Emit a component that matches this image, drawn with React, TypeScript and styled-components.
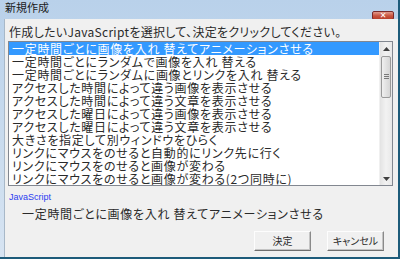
import styled, { createGlobalStyle } from "styled-components";

const GlobalStyle = createGlobalStyle`
  html, body {
    margin: 0;
    padding: 0;
    width: 400px;
    height: 259px;
    overflow: hidden;
    background: #f0f0f0;
  }
  * {
    box-sizing: border-box;
  }
`;

const Window = styled.div`
  width: 400px;
  height: 259px;
  display: flex;
  flex-direction: column;
  background: linear-gradient(180deg, #b9d1ea 0%, #d7e4f2 100%);
  border-right: 2px solid #1d5b7a;
  border-bottom: 2px solid #1d5b7a;
  font-family: "Noto Sans CJK JP", "Noto Sans", sans-serif;
  font-feature-settings: "palt";
  color: #2a2a2a;
`;

const TitleBar = styled.div`
  height: 19px;
  flex: none;
  display: flex;
  align-items: flex-start;
  justify-content: space-between;
  padding: 0 4px 0 5px;
`;

const Title = styled.div`
  font-size: 11px;
  line-height: 15px;
  color: #1a1a1a;
`;

const CloseButton = styled.div`
  width: 22px;
  height: 9px;
  margin-top: 11px;
  border: 1px solid #7a2a2a;
  border-radius: 2px;
  background: linear-gradient(180deg, #e29a8c 0%, #c9543f 55%, #b8402c 100%);
  color: #fff;
  font-family: "DejaVu Sans", sans-serif;
  font-weight: bold;
  font-size: 8px;
  line-height: 7px;
  text-align: center;
`;

const Client = styled.div`
  flex: 1;
  margin: 0 0 0 4px;
  background: #f0f0f0;
  border-left: 1px solid #a8b8c8;
  display: flex;
  flex-direction: column;
  padding: 5px 6px 6px 3px;
`;

const Prompt = styled.div`
  font-size: 12px;
  line-height: 16px;
  letter-spacing: 0.3px;
  padding-left: 1px;
  margin-bottom: 1px;
`;

const ListBox = styled.div`
  height: 145px;
  width: 385px;
  border: 1px solid #828790;
  background: #fff;
  display: flex;
`;

const Items = styled.div`
  flex: 1;
  overflow: hidden;
`;

const Row = styled.div<{ $selected?: boolean }>`
  height: 13px;
  line-height: 13px;
  font-size: 12px;
  letter-spacing: 0.7px;
  padding-left: 3px;
  white-space: nowrap;
  background: ${(p) => (p.$selected ? "#3399ff" : "transparent")};
  color: ${(p) => (p.$selected ? "#ffffff" : "#2a2a2a")};
`;

const ScrollBar = styled.div`
  width: 13px;
  flex: none;
  display: flex;
  flex-direction: column;
  background: linear-gradient(90deg, #e3e3e3 0%, #f2f2f2 50%, #e8e8e8 100%);
  border-left: 1px solid #f0f0f0;
`;

const Arrow = styled.div`
  height: 13px;
  flex: none;
  display: flex;
  align-items: center;
  justify-content: center;
`;

const Track = styled.div`
  flex: 1;
  padding: 1px 1px;
`;

const Thumb = styled.div`
  height: 42px;
  border: 1px solid #9a9a9a;
  border-radius: 2px;
  background: linear-gradient(90deg, #f0f0f0 0%, #e2e2e2 50%, #d6d6d6 100%);
  display: flex;
  align-items: center;
  justify-content: center;
`;

const Grip = styled.div`
  width: 5px;
  height: 6px;
  background: repeating-linear-gradient(180deg, #7a7a7a 0 1px, transparent 1px 2px);
`;

const Caption = styled.div`
  margin-top: 6px;
  font-family: "Liberation Sans", Arial, sans-serif;
  font-size: 9px;
  line-height: 10px;
  color: #2a3cf0;
  padding-left: 1px;
`;

const Description = styled.div`
  margin-top: 4px;
  padding-left: 14px;
  font-size: 12px;
  line-height: 16px;
  letter-spacing: 0.7px;
`;

const Buttons = styled.div`
  margin-top: auto;
  display: flex;
  justify-content: flex-end;
  gap: 16px;
  padding-right: 8px;
`;

const Button = styled.div`
  width: 57px;
  height: 20px;
  border: 1px solid;
  border-color: #fdfdfd #8a8a8a #6f6f6f #fdfdfd;
  box-shadow: inset -1px -1px 0 #c4c4c4;
  background: #f0f0f0;
  font-size: 10px;
  line-height: 18px;
  text-align: center;
`;

const items = [
  "一定時間ごとに画像を入れ 替えてアニメーションさせる",
  "一定時間ごとにランダムで画像を入れ 替える",
  "一定時間ごとにランダムに画像とリンクを入れ 替える",
  "アクセスした時間によって違う画像を表示させる",
  "アクセスした時間によって違う文章を表示させる",
  "アクセスした曜日によって違う画像を表示させる",
  "アクセスした曜日によって違う文章を表示させる",
  "大きさを指定して別ウィンドウをひらく",
  "リンクにマウスをのせると自動的にリンク先に行く",
  "リンクにマウスをのせると画像が変わる",
  "リンクにマウスをのせると画像が変わる(2つ同時に)",
];

export default function App() {
  return (
    <>
      <GlobalStyle />
      <Window>
        <TitleBar>
          <Title>新規作成</Title>
          <CloseButton>✕</CloseButton>
        </TitleBar>
        <Client>
          <Prompt>作成したいJavaScriptを選択して、決定をクリックしてください。</Prompt>
          <ListBox>
            <Items>
              {items.map((x, i) => (
                <Row key={i} $selected={i === 0}>
                  {x}
                </Row>
              ))}
            </Items>
            <ScrollBar>
              <Arrow>
                <svg width="7" height="4" viewBox="0 0 7 4">
                  <path d="M0 4 L3.5 0 L7 4 Z" fill="#404040" />
                </svg>
              </Arrow>
              <Track>
                <Thumb>
                  <Grip />
                </Thumb>
              </Track>
              <Arrow>
                <svg width="7" height="4" viewBox="0 0 7 4">
                  <path d="M0 0 L3.5 4 L7 0 Z" fill="#404040" />
                </svg>
              </Arrow>
            </ScrollBar>
          </ListBox>
          <Caption>JavaScript</Caption>
          <Description>一定時間ごとに画像を入れ 替えてアニメーションさせる</Description>
          <Buttons>
            <Button>決定</Button>
            <Button>キャンセル</Button>
          </Buttons>
        </Client>
      </Window>
    </>
  );
}
